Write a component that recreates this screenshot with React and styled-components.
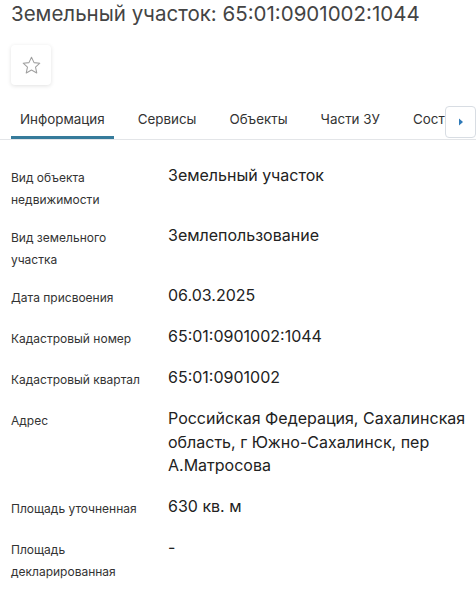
import React from "react";
import styled, { createGlobalStyle } from "styled-components";

const Global = createGlobalStyle`
  html, body { margin: 0; padding: 0; background: #fff; }
  body { font-family: Inter, "Noto Sans", sans-serif; -webkit-font-smoothing: antialiased; }
`;

const Page = styled.div`
  width: 476px;
  height: 595px;
  overflow: hidden;
  background: #fff;
`;

const Title = styled.h1`
  margin: 0;
  padding: 2px 0 0 11px;
  font-size: 20.5px;
  line-height: 24px;
  font-weight: 400;
  color: #444;
  white-space: nowrap;
`;

const Actions = styled.div`
  display: flex;
  padding: 19px 0 0 11px;
`;

const StarButton = styled.button`
  width: 40px;
  height: 40px;
  border: none;
  border-radius: 4px;
  background: #fff;
  box-shadow: 0 1px 4px rgba(0, 0, 0, 0.12);
  display: flex;
  align-items: center;
  justify-content: center;
  padding: 0;
`;

const TabsBar = styled.div`
  position: relative;
  margin-top: 20px;
  display: flex;
  gap: 15px;
  padding-left: 11px;
  border-bottom: 1px solid #e3e5e8;
  white-space: nowrap;
  overflow: hidden;
`;

const Tab = styled.div`
  flex: none;
  padding: 0 9px;
  height: 31px;
  font-size: 13.4px;
  line-height: 28px;
  color: #333;
  border-bottom: 3px solid ${(p) => (p.$active ? "#367b9b" : "transparent")};
`;

const ScrollButton = styled.button`
  position: absolute;
  right: 0;
  top: 1px;
  width: 31px;
  height: 32px;
  padding: 0;
  background: #fff;
  border: 1px solid #d8dde3;
  border-radius: 4px;
  display: flex;
  align-items: center;
  justify-content: center;
`;

const Rows = styled.div`
  display: flex;
  flex-direction: column;
  gap: 16px;
  padding: 27px 0 0 11px;
`;

const Row = styled.div`
  display: grid;
  grid-template-columns: 157px 1fr;
`;

const Label = styled.div`
  font-size: 12px;
  line-height: 22px;
  color: #333;
`;

const Value = styled.div`
  font-size: 16px;
  line-height: 23.5px;
  color: #222;
  padding-right: 8px;
  margin-top: -3px;
  padding-bottom: 4.5px;
`;

const rows = [
  ["Вид объекта\nнедвижимости", "Земельный участок"],
  ["Вид земельного\nучастка", "Землепользование"],
  ["Дата присвоения", "06.03.2025"],
  ["Кадастровый номер", "65:01:0901002:1044"],
  ["Кадастровый квартал", "65:01:0901002"],
  ["Адрес", "Российская Федерация, Сахалинская область, г Южно-Сахалинск, пер А.Матросова"],
  ["Площадь уточненная", "630 кв. м"],
  ["Площадь\nдекларированная", "-"],
  ["Площадь", "-"],
];

export default function App() {
  return (
    <Page>
      <Global />
      <Title>Земельный участок: 65:01:0901002:1044</Title>
      <Actions>
        <StarButton aria-label="В избранное">
          <svg width="21" height="21" viewBox="0 0 24 24" fill="none" stroke="#a0a0a0" strokeWidth="1.2" strokeLinejoin="round">
            <path d="M12 2.5l2.9 6.2 6.6.7-4.9 4.5 1.4 6.6L12 17.2l-6 3.3 1.4-6.6-4.9-4.5 6.6-.7z" />
          </svg>
        </StarButton>
      </Actions>
      <TabsBar>
        <Tab $active>Информация</Tab>
        <Tab>Сервисы</Tab>
        <Tab>Объекты</Tab>
        <Tab>Части ЗУ</Tab>
        <Tab>Состав</Tab>
        <ScrollButton aria-label="Далее">
          <svg width="8" height="10" viewBox="0 0 8 10">
            <path d="M2 1.5L6 5 2 8.5z" fill="#2f7ab8" />
          </svg>
        </ScrollButton>
      </TabsBar>
      <Rows>
        {rows.map(([l, v], i) => (
          <Row key={i}>
            <Label>
              {l.split("\n").map((s, j) => (
                <div key={j}>{s}</div>
              ))}
            </Label>
            <Value>{v}</Value>
          </Row>
        ))}
      </Rows>
    </Page>
  );
}
